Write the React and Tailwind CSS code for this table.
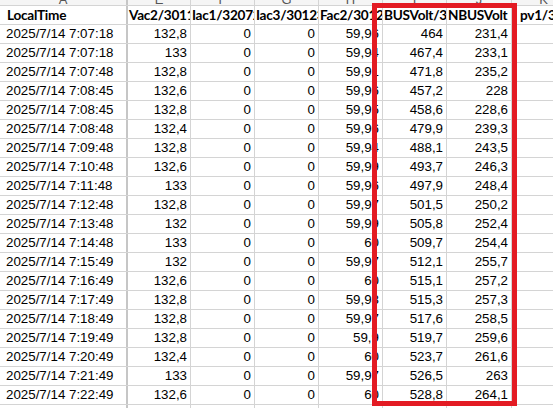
import React from "react";

const rows = [
  ["2025/7/14 7:07:18", "132,8", "0", "0", "59,96", "464", "231,4"],
  ["2025/7/14 7:07:18", "133", "0", "0", "59,94", "467,4", "233,1"],
  ["2025/7/14 7:07:48", "132,8", "0", "0", "59,91", "471,8", "235,2"],
  ["2025/7/14 7:08:45", "132,6", "0", "0", "59,96", "457,2", "228"],
  ["2025/7/14 7:08:45", "132,8", "0", "0", "59,95", "458,6", "228,6"],
  ["2025/7/14 7:08:48", "132,4", "0", "0", "59,96", "479,9", "239,3"],
  ["2025/7/14 7:09:48", "132,8", "0", "0", "59,94", "488,1", "243,5"],
  ["2025/7/14 7:10:48", "132,6", "0", "0", "59,99", "493,7", "246,3"],
  ["2025/7/14 7:11:48", "133", "0", "0", "59,96", "497,9", "248,4"],
  ["2025/7/14 7:12:48", "132,8", "0", "0", "59,97", "501,5", "250,2"],
  ["2025/7/14 7:13:48", "132", "0", "0", "59,99", "505,8", "252,4"],
  ["2025/7/14 7:14:48", "133", "0", "0", "60", "509,7", "254,4"],
  ["2025/7/14 7:15:49", "132", "0", "0", "59,97", "512,1", "255,7"],
  ["2025/7/14 7:16:49", "132,6", "0", "0", "60", "515,1", "257,2"],
  ["2025/7/14 7:17:49", "132,8", "0", "0", "59,98", "515,3", "257,3"],
  ["2025/7/14 7:18:49", "132,8", "0", "0", "59,97", "517,6", "258,5"],
  ["2025/7/14 7:19:49", "132,8", "0", "0", "59,9", "519,7", "259,6"],
  ["2025/7/14 7:20:49", "132,4", "0", "0", "60", "523,7", "261,6"],
  ["2025/7/14 7:21:49", "133", "0", "0", "59,97", "526,5", "263"],
  ["2025/7/14 7:22:49", "132,6", "0", "0", "60", "528,8", "264,1"],
];

const headers = [
  "LocalTime",
  "Vac2/30117",
  "Iac1/32072",
  "Iac3/30123",
  "Fac2/30125",
  "BUSVolt/30",
  "NBUSVolt",
  "pv1/3010",
];

const letters = ["A", "E", "F", "G", "H", "I", "J", "K"];

const cols = "grid grid-cols-[128px_63px_64px_64px_64px_64px_65px_64px]";

export default function App() {
  return (
    <div className="relative w-[553px] h-[408px] overflow-hidden bg-white">
      <div className="w-[620px]">
        {/* column letter strip */}
        <div className={`${cols} h-[6px] border-b border-[#d4d4d4] bg-[#f5f5f5]`}>
          {letters.map((l, i) => (
            <div
              key={i}
              className={`flex items-end justify-center overflow-hidden ${
                i === 0 ? "border-r-2 border-[#c6c6c6]" : "border-r border-[#d4d4d4]"
              }`}
            >
              <span className="text-[13px] leading-[11px] text-[#555] font-['Liberation_Sans',sans-serif]">
                {l}
              </span>
            </div>
          ))}
        </div>
        {/* header row */}
        <div className={`${cols} h-[19px] border-b border-[#d4d4d4]`}>
          {headers.map((h, i) => (
            <div
              key={i}
              className={`flex items-center overflow-hidden whitespace-nowrap font-['Lato',sans-serif] font-bold text-[13.6px] tracking-[-0.25px] text-black ${
                i === 0
                  ? "pl-[7px] border-r-2 border-[#c6c6c6]"
                  : i === 7
                  ? "pl-[8px] border-r border-[#d4d4d4]"
                  : "pl-[1px] border-r border-[#d4d4d4]"
              }`}
            >
              {h}
            </div>
          ))}
        </div>
        {/* data rows */}
        {rows.map((r, ri) => (
          <div key={ri} className={`${cols} h-[19px] border-b border-[#d4d4d4]`}>
            {[...r, ""].map((c, ci) => (
              <div
                key={ci}
                className={`flex items-center overflow-hidden whitespace-nowrap font-['Liberation_Sans',sans-serif] text-[13.33px] text-black ${
                  ci === 0
                    ? "pl-[6px] border-r-2 border-[#c6c6c6]"
                    : "justify-end pr-[3px] border-r border-[#d4d4d4]"
                }`}
              >
                {c}
              </div>
            ))}
          </div>
        ))}
        <div className={`${cols} h-[19px] border-b border-[#d4d4d4]`}>
          {letters.map((l, i) => (
            <div
              key={i}
              className={i === 0 ? "border-r-2 border-[#c6c6c6]" : "border-r border-[#d4d4d4]"}
            />
          ))}
        </div>
      </div>
      {/* red highlight */}
      <div className="absolute left-[372px] top-[3px] w-[145px] h-[403px] border-[5px] border-[#e31b23]" />
    </div>
  );
}
